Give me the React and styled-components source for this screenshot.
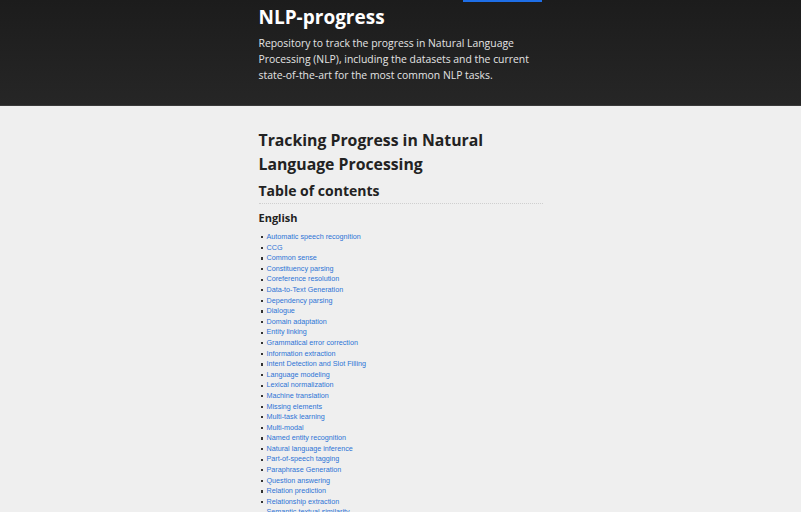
import React from "react";
import styled, { createGlobalStyle } from "styled-components";

const Global = createGlobalStyle`
  html, body { margin: 0; padding: 0; overflow: hidden; background: #efefef; }
  body { font-family: "Open Sans", "Noto Sans", sans-serif; }
`;

const Header = styled.header`
  background: linear-gradient(180deg, #1c1c1c 0%, #262626 100%);
  height: 106px;
  box-sizing: border-box;
  border-bottom: 1px solid #3a3a3a;
`;

const Column = styled.div`
  width: 284px;
  margin: 0 auto;
`;

const ButtonRow = styled.div`
  display: flex;
  justify-content: flex-end;
  padding-right: 1px;
`;

const ButtonEdge = styled.div`
  width: 79px;
  height: 2px;
  background: #1e6ee6;
`;

const Title = styled.h1`
  margin: 3px 0 0;
  color: #ffffff;
  font-size: 19px;
  font-weight: bold;
  line-height: 24px;
`;

const Tagline = styled.p`
  margin: 6px 0 0;
  color: #e4e4e4;
  font-size: 10.4px;
  line-height: 16px;
`;

const Main = styled.main`
  padding-top: 22px;
`;

const H1 = styled.h1`
  margin: 0;
  color: #222;
  font-size: 15.8px;
  font-weight: bold;
  line-height: 24px;
`;

const H2 = styled.h2`
  margin: 5px 0 0;
  color: #222;
  font-size: 14px;
  font-weight: bold;
  line-height: 20px;
  padding-bottom: 2px;
  border-bottom: 1px dotted #cfcfcf;
`;

const H3 = styled.h3`
  margin: 5px 0 0;
  color: #222;
  font-size: 11px;
  font-weight: bold;
  line-height: 18px;
`;

const List = styled.ul`
  margin: 5px 0 0;
  padding: 0 0 0 8px;
  list-style: none;
`;

const Item = styled.li`
  position: relative;
  font-family: "Liberation Sans", Arial, sans-serif;
  font-size: 7.2px;
  line-height: 10.6px;
  &::before {
    content: "";
    position: absolute;
    left: -6px;
    top: 4.2px;
    width: 2.2px;
    height: 2.2px;
    background: #333;
  }
`;

const Link = styled.a`
  color: #2c74d6;
  text-decoration: none;
`;

const items = [
  "Automatic speech recognition",
  "CCG",
  "Common sense",
  "Constituency parsing",
  "Coreference resolution",
  "Data-to-Text Generation",
  "Dependency parsing",
  "Dialogue",
  "Domain adaptation",
  "Entity linking",
  "Grammatical error correction",
  "Information extraction",
  "Intent Detection and Slot Filling",
  "Language modeling",
  "Lexical normalization",
  "Machine translation",
  "Missing elements",
  "Multi-task learning",
  "Multi-modal",
  "Named entity recognition",
  "Natural language inference",
  "Part-of-speech tagging",
  "Paraphrase Generation",
  "Question answering",
  "Relation prediction",
  "Relationship extraction",
  "Semantic textual similarity",
  "Semantic parsing",
  "Semantic role labeling",
  "Sentiment analysis",
];

export default function App() {
  return (
    <>
      <Global />
      <Header>
        <Column>
          <ButtonRow>
            <ButtonEdge />
          </ButtonRow>
          <Title>NLP-progress</Title>
          <Tagline>
            Repository to track the progress in Natural Language Processing
            (NLP), including the datasets and the current state-of-the-art for
            the most common NLP tasks.
          </Tagline>
        </Column>
      </Header>
      <Main>
        <Column>
          <H1>Tracking Progress in Natural Language Processing</H1>
          <H2>Table of contents</H2>
          <H3>English</H3>
          <List>
            {items.map((t) => (
              <Item key={t}>
                <Link href="#">{t}</Link>
              </Item>
            ))}
          </List>
        </Column>
      </Main>
    </>
  );
}
